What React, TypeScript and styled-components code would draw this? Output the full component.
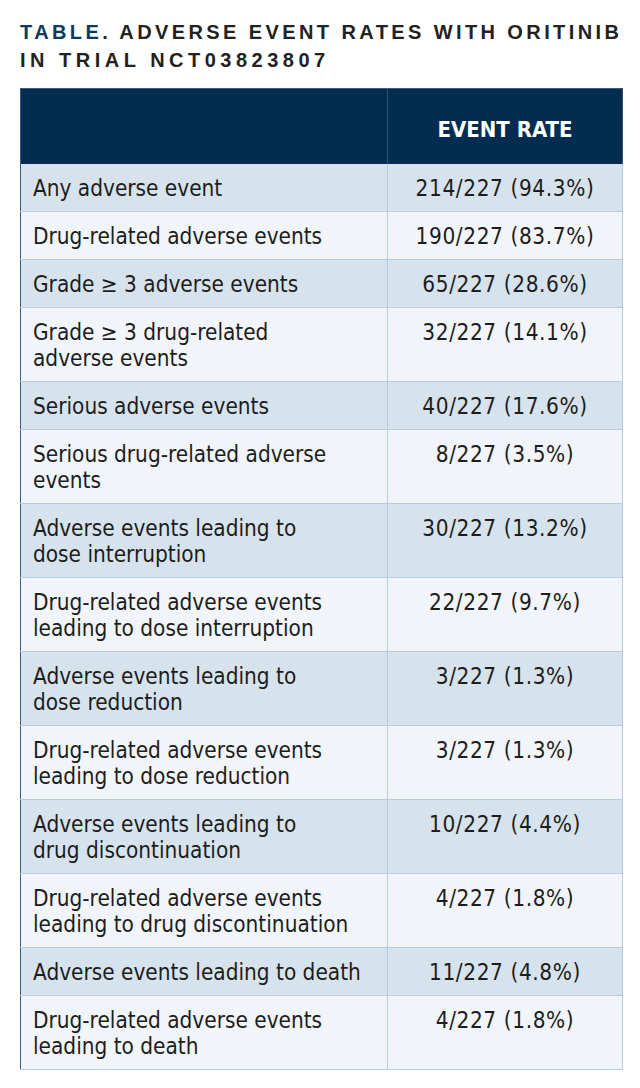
import React from 'react';
import styled, { createGlobalStyle } from 'styled-components';

const GlobalStyle = createGlobalStyle`
  html, body {
    margin: 0;
    padding: 0;
    background: #ffffff;
  }
  body {
    font-family: "Liberation Sans Narrow", "DejaVu Sans Condensed", "Liberation Sans", sans-serif;
    font-stretch: condensed;
  }
`;

const Page = styled.div`
  width: 640px;
  padding: 18px 0 0 20px;
  box-sizing: border-box;
`;

const Title = styled.h2`
  margin: 0 0 14px;
  font-family: "Liberation Sans", Arial, sans-serif;
  font-stretch: normal;
  font-size: 20px;
  font-weight: 700;
  line-height: 28px;
  letter-spacing: 3.4px;
  text-transform: uppercase;
  white-space: nowrap;
  color: #222222;
`;

const TitleLead = styled.span`
  color: #0c3a5e;
`;

const TitleSecond = styled.span`
  letter-spacing: 4.5px;
`;

const Table = styled.table`
  width: 603px;
  border-collapse: collapse;
  border: 1px solid #3c5c7a;
  table-layout: fixed;
`;

const HeadCell = styled.th`
  background: #022d50;
  color: #ffffff;
  height: 75px;
  padding: 6px 0 0;
  font-size: 22px;
  font-weight: 700;
  text-align: center;
  border-right: 1px solid #2d5373;
  box-sizing: border-box;
`;

const Row = styled.tr<{ $shade: boolean }>`
  background: ${({ $shade }) => ($shade ? '#d7e3ec' : '#f1f5f9')};
`;

const Cell = styled.td<{ $center?: boolean }>`
  padding: 11px 12px 10px;
  border-bottom: 1px solid #b6cde0;
  border-right: 1px solid #b6cde0;
  font-size: 22.4px;
  line-height: 26px;
  letter-spacing: ${({ $center }) => ($center ? '0.6px' : '0')};
  color: #1d1d1d;
  vertical-align: top;
  white-space: nowrap;
  text-align: ${({ $center }) => ($center ? 'center' : 'left')};
`;

const rows: [string[], string][] = [
  [['Any adverse event'], '214/227 (94.3%)'],
  [['Drug-related adverse events'], '190/227 (83.7%)'],
  [['Grade ≥ 3 adverse events'], '65/227 (28.6%)'],
  [['Grade ≥ 3 drug-related', 'adverse events'], '32/227 (14.1%)'],
  [['Serious adverse events'], '40/227 (17.6%)'],
  [['Serious drug-related adverse', 'events'], '8/227 (3.5%)'],
  [['Adverse events leading to', 'dose interruption'], '30/227 (13.2%)'],
  [['Drug-related adverse events', 'leading to dose interruption'], '22/227 (9.7%)'],
  [['Adverse events leading to', 'dose reduction'], '3/227 (1.3%)'],
  [['Drug-related adverse events', 'leading to dose reduction'], '3/227 (1.3%)'],
  [['Adverse events leading to', 'drug discontinuation'], '10/227 (4.4%)'],
  [['Drug-related adverse events', 'leading to drug discontinuation'], '4/227 (1.8%)'],
  [['Adverse events leading to death'], '11/227 (4.8%)'],
  [['Drug-related adverse events', 'leading to death'], '4/227 (1.8%)'],
];

const App: React.FC = () => (
  <>
    <GlobalStyle />
    <Page>
      <Title>
        <TitleLead>Table</TitleLead>. Adverse event rates with oritinib
        <br />
        <TitleSecond>in trial NCT03823807</TitleSecond>
      </Title>
      <Table>
        <colgroup>
          <col style={{ width: 367 }} />
          <col />
        </colgroup>
        <thead>
          <tr>
            <HeadCell />
            <HeadCell>EVENT RATE</HeadCell>
          </tr>
        </thead>
        <tbody>
          {rows.map(([lines, rate], i) => (
            <Row key={lines.join(' ')} $shade={i % 2 === 0}>
              <Cell>
                {lines.map((line, j) => (
                  <React.Fragment key={line}>
                    {j > 0 && <br />}
                    {line}
                  </React.Fragment>
                ))}
              </Cell>
              <Cell $center>{rate}</Cell>
            </Row>
          ))}
        </tbody>
      </Table>
    </Page>
  </>
);

export default App;
